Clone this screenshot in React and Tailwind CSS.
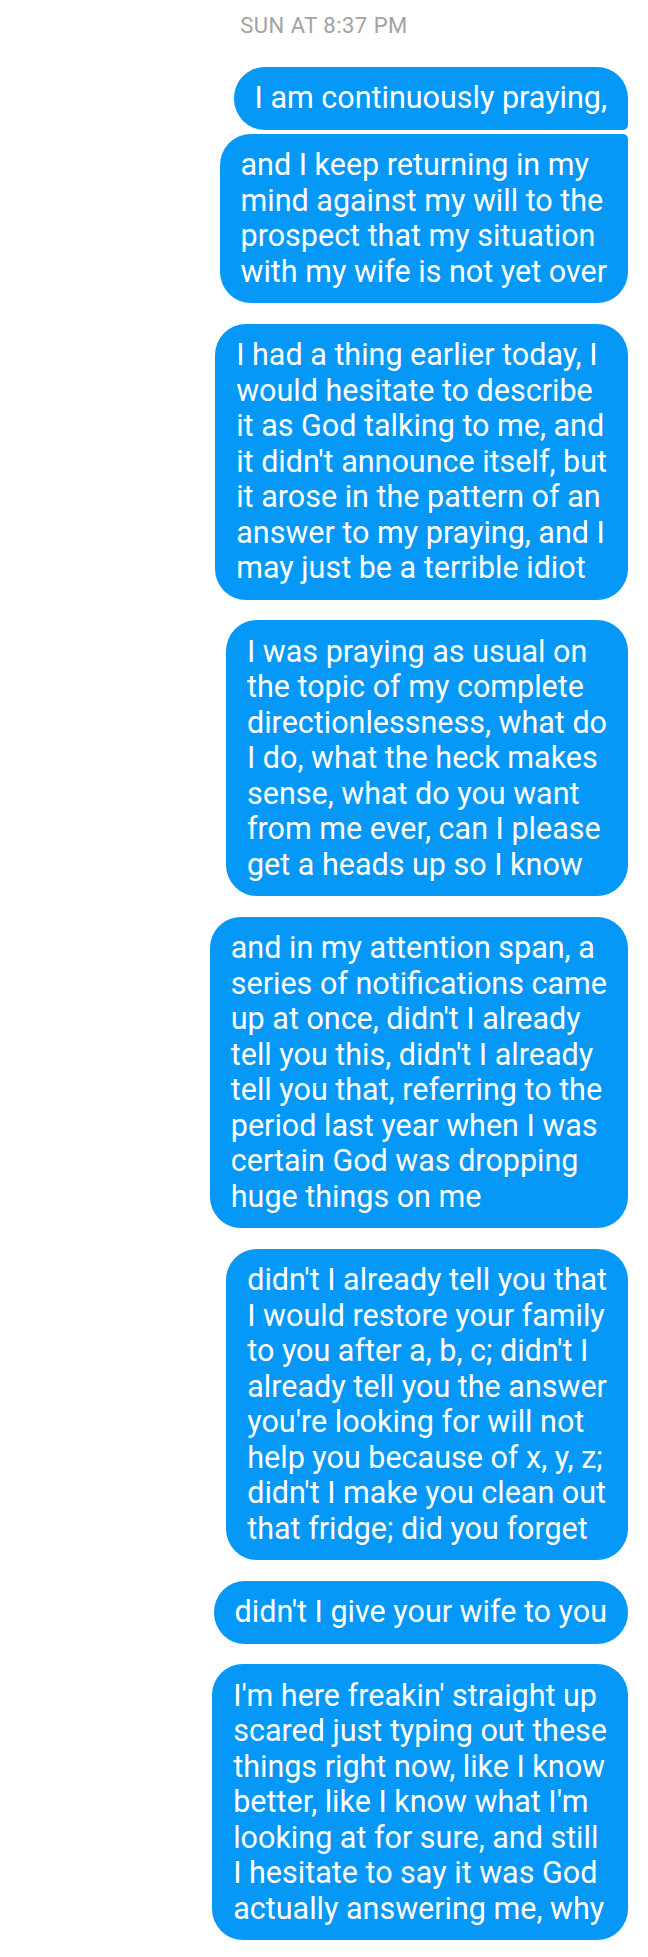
import React from "react";

const messages = [
  { lines: ["I am continuously praying,"], shape: "first" },
  {
    lines: [
      "and I keep returning in my",
      "mind against my will to the",
      "prospect that my situation",
      "with my wife is not yet over",
    ],
    shape: "last",
    gap: "mt-[4px]",
  },
  {
    lines: [
      "I had a thing earlier today, I",
      "would hesitate to describe",
      "it as God talking to me, and",
      "it didn't announce itself, but",
      "it arose in the pattern of an",
      "answer to my praying, and I",
      "may just be a terrible idiot",
    ],
  },
  {
    lines: [
      "I was praying as usual on",
      "the topic of my complete",
      "directionlessness, what do",
      "I do, what the heck makes",
      "sense, what do you want",
      "from me ever, can I please",
      "get a heads up so I know",
    ],
  },
  {
    lines: [
      "and in my attention span, a",
      "series of notifications came",
      "up at once, didn't I already",
      "tell you this, didn't I already",
      "tell you that, referring to the",
      "period last year when I was",
      "certain God was dropping",
      "huge things on me",
    ],
  },
  {
    lines: [
      "didn't I already tell you that",
      "I would restore your family",
      "to you after a, b, c; didn't I",
      "already tell you the answer",
      "you're looking for will not",
      "help you because of x, y, z;",
      "didn't I make you clean out",
      "that fridge; did you forget",
    ],
  },
  { lines: ["didn't I give your wife to you"] },
  {
    lines: [
      "I'm here freakin' straight up",
      "scared just typing out these",
      "things right now, like I know",
      "better, like I know what I'm",
      "looking at for sure, and still",
      "I hesitate to say it was God",
      "actually answering me, why",
    ],
  },
];

function Bubble({ lines, shape, gap }) {
  const corners =
    shape === "first"
      ? "rounded-[31px] rounded-br-[5px]"
      : shape === "last"
      ? "rounded-[31px] rounded-tr-[5px]"
      : "rounded-[31px]";
  return (
    <div
      className={`${gap || "mt-[20.5px]"} ${corners} w-fit bg-[#0598f6] px-[21px] py-[13.75px] text-[30.5px] leading-[35.5px] text-white`}
    >
      {lines.map((l, i) => (
        <div key={i} className="whitespace-nowrap">
          {l}
        </div>
      ))}
    </div>
  );
}

export default function App() {
  return (
    <div
      className="min-h-[1957px] w-[648px] bg-white pb-[21px]"
      style={{ fontFamily: "Roboto, 'Noto Sans', sans-serif" }}
    >
      {/* timestamp */}
      <div className="pt-[13px] text-center text-[22px] leading-[26px] tracking-[0.5px] text-[#a3a3a3]">
        SUN AT 8:37 PM
      </div>
      <div className="flex flex-col items-end pr-[20px] pt-[7.5px]">
        {messages.map((m, i) => (
          <Bubble key={i} {...m} gap={i === 0 ? "mt-[20px]" : m.gap} />
        ))}
      </div>
    </div>
  );
}
